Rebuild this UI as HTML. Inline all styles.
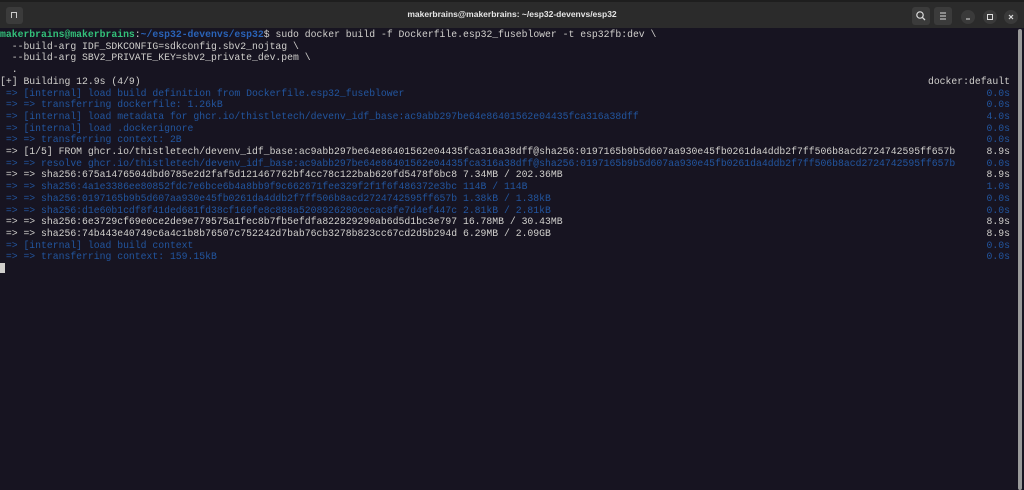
<!DOCTYPE html>
<html><head><meta charset="utf-8"><style>
html,body{margin:0;padding:0;width:1024px;height:490px;overflow:hidden;background:#171421;}
.tb{position:absolute;left:0;top:0;width:1024px;height:28px;background:#2b2b2b;border-top:2px solid #1e1e1e;box-sizing:border-box;}
.title{position:absolute;left:0;right:0;top:7px;text-align:center;color:#e6e6e6;font:bold 8.5px "Liberation Sans",sans-serif;}
.btn{position:absolute;top:5px;width:18px;height:18px;background:#3b3b3b;border-radius:3px;}
.cir{position:absolute;top:8px;width:14px;height:14px;background:#3a3a3a;border-radius:50%;}
.sb{position:absolute;left:1018px;top:29px;width:4px;height:461px;background:#9a9a9a;border-radius:2px;}
pre{position:absolute;left:0;top:29px;margin:0;font-family:"Liberation Mono",monospace;font-size:9.78px;line-height:11.7px;color:#d0cfcc;white-space:pre;}
.g{color:#33c07a;font-weight:bold}.b{color:#2a63b8;font-weight:bold}.d{color:#22559e}
.r{position:absolute;right:14px;text-align:right;top:75.8px !important;}
.cur{display:inline-block;width:5px;height:10px;background:#d0cfcc;vertical-align:-1px}
</style></head><body>
<div class="tb">
 <div style="position:absolute;left:6px;top:5px;width:17px;height:17px;background:#3b3b3b;border-radius:3px;"><div style="position:absolute;left:5px;top:5px;width:6px;height:6px;border:1px solid #ccc;border-bottom:none;box-sizing:border-box;"></div></div>
 <div class="title">makerbrains@makerbrains: ~/esp32-devenvs/esp32</div>
 <div class="btn" style="left:912px"><svg width="18" height="18"><circle cx="8" cy="8" r="3.2" fill="none" stroke="#ddd" stroke-width="1.2"/><line x1="10.4" y1="10.4" x2="13" y2="13" stroke="#ddd" stroke-width="1.3"/></svg></div>
 <div class="btn" style="left:934px"><svg width="18" height="18"><path d="M6 6h6M6 9h6M6 12h6" stroke="#ddd" stroke-width="1.1"/></svg></div>
 <div class="cir" style="left:961px"><svg width="14" height="14"><line x1="5" y1="9" x2="9" y2="9" stroke="#ddd"/></svg></div>
 <div class="cir" style="left:983px"><svg width="14" height="14"><rect x="4.5" y="4.5" width="5" height="5" fill="none" stroke="#ddd"/></svg></div>
 <div class="cir" style="left:1004px"><svg width="14" height="14"><path d="M5 5l4 4M9 5l-4 4" stroke="#ddd" stroke-width="1.2"/></svg></div>
</div>
<div class="sb"></div>
<pre><span class="g">makerbrains@makerbrains</span>:<span class="b">~/esp32-devenvs/esp32</span>$ sudo docker build -f Dockerfile.esp32_fuseblower -t esp32fb:dev \
  --build-arg IDF_SDKCONFIG=sdkconfig.sbv2_nojtag \
  --build-arg SBV2_PRIVATE_KEY=sbv2_private_dev.pem \
  .
[+] Building 12.9s (4/9)
<span class="d"> =&gt; [internal] load build definition from Dockerfile.esp32_fuseblower</span>
<span class="d"> =&gt; =&gt; transferring dockerfile: 1.26kB</span>
<span class="d"> =&gt; [internal] load metadata for ghcr.io/thistletech/devenv_idf_base:ac9abb297be64e86401562e04435fca316a38dff</span>
<span class="d"> =&gt; [internal] load .dockerignore</span>
<span class="d"> =&gt; =&gt; transferring context: 2B</span>
 =&gt; [1/5] FROM ghcr.io/thistletech/devenv_idf_base:ac9abb297be64e86401562e04435fca316a38dff@sha256:0197165b9b5d607aa930e45fb0261da4ddb2f7ff506b8acd2724742595ff657b
<span class="d"> =&gt; =&gt; resolve ghcr.io/thistletech/devenv_idf_base:ac9abb297be64e86401562e04435fca316a38dff@sha256:0197165b9b5d607aa930e45fb0261da4ddb2f7ff506b8acd2724742595ff657b</span>
 =&gt; =&gt; sha256:675a1476504dbd0785e2d2faf5d121467762bf4cc78c122bab620fd5478f6bc8 7.34MB / 202.36MB
<span class="d"> =&gt; =&gt; sha256:4a1e3386ee80852fdc7e6bce6b4a8bb9f9c662671fee329f2f1f6f486372e3bc 114B / 114B</span>
<span class="d"> =&gt; =&gt; sha256:0197165b9b5d607aa930e45fb0261da4ddb2f7ff506b8acd2724742595ff657b 1.38kB / 1.38kB</span>
<span class="d"> =&gt; =&gt; sha256:d1e60b1cdf8f41ded681fd38cf160fe8c888a5208926280cecac8fe7d4ef447c 2.81kB / 2.81kB</span>
 =&gt; =&gt; sha256:6e3729cf69e0ce2de9e779575a1fec8b7fb5efdfa822829290ab6d5d1bc3e797 16.78MB / 30.43MB
 =&gt; =&gt; sha256:74b443e40749c6a4c1b8b76507c752242d7bab76cb3278b823cc67cd2d5b294d 6.29MB / 2.09GB
<span class="d"> =&gt; [internal] load build context</span>
<span class="d"> =&gt; =&gt; transferring context: 159.15kB</span>
<span class="cur"></span></pre>
<pre class="r" style="left:auto">docker:default
<span class="d">0.0s</span>
<span class="d">0.0s</span>
<span class="d">4.0s</span>
<span class="d">0.0s</span>
<span class="d">0.0s</span>
8.9s
<span class="d">0.0s</span>
8.9s
<span class="d">1.0s</span>
<span class="d">0.0s</span>
<span class="d">0.0s</span>
8.9s
8.9s
<span class="d">0.0s</span>
<span class="d">0.0s</span></pre>
</body></html>
